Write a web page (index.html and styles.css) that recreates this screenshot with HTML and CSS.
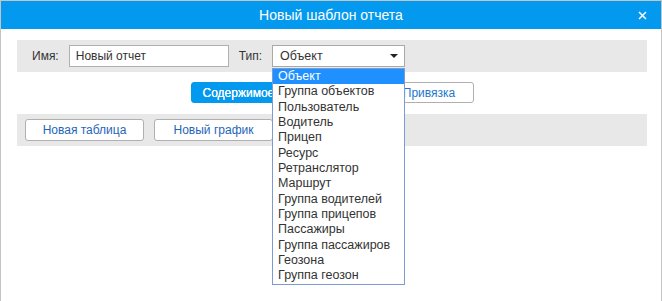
FILE: index.html
```html
<!DOCTYPE html>
<html lang="ru">
<head>
<meta charset="utf-8">
<title>Новый шаблон отчета</title>
<link rel="stylesheet" href="styles.css">
</head>
<body>
<div class="dialog">
  <div class="header">
    <span class="title">Новый шаблон отчета</span>
    <span class="close">
      <svg width="9" height="9" viewBox="0 0 9 9"><path d="M1 1L8 8M8 1L1 8" stroke="#fff" stroke-width="1.5" fill="none"/></svg>
    </span>
  </div>
  <div class="content">
    <div class="band props">
      <label class="lbl">Имя:</label>
      <div class="input">Новый отчет</div>
      <label class="lbl lbl-type">Тип:</label>
      <div class="select-wrap">
        <div class="select">
          <span>Объект</span>
          <span class="arrow"></span>
        </div>
        <ul class="options">
          <li class="sel">Объект</li>
          <li>Группа объектов</li>
          <li>Пользователь</li>
          <li>Водитель</li>
          <li>Прицеп</li>
          <li>Ресурс</li>
          <li>Ретранслятор</li>
          <li>Маршрут</li>
          <li>Группа водителей</li>
          <li>Группа прицепов</li>
          <li>Пассажиры</li>
          <li>Группа пассажиров</li>
          <li>Геозона</li>
          <li>Группа геозон</li>
        </ul>
      </div>
    </div>
    <div class="tabs">
      <button class="tab active t1">Содержимое</button>
      <button class="tab t2" aria-label="Параметры"></button>
      <button class="tab t3">Привязка</button>
    </div>
    <div class="band tools">
      <button class="btn">Новая таблица</button>
      <button class="btn">Новый график</button>
      <button class="btn" aria-label="Новая секция"></button>
    </div>
  </div>
</div>
</body>
</html>
```

FILE: styles.css
```css
* { box-sizing: border-box; }
html, body { margin: 0; padding: 0; background: #fff; }
body { font-family: "Liberation Sans", Arial, sans-serif; font-size: 12px; color: #333; }

.dialog {
  width: 662px;
  height: 301px;
  border: 1px solid #c4c4c4;
  border-bottom: none;
  position: relative;
}

.header {
  height: 28px;
  background: #0399ee;
  display: flex;
  align-items: center;
  justify-content: center;
  position: relative;
}
.title { color: #fff; font-size: 14px; }
.close {
  position: absolute;
  right: 14px;
  top: 10px;
  width: 9px;
  height: 9px;
  display: block;
  line-height: 0;
}

.content { padding: 11px 14px 0 16px; }

.band {
  background: #e8e8e8;
  height: 32px;
  display: flex;
  align-items: center;
}
.props { padding-left: 15px; }

.lbl { color: #333; margin-right: 10px; }
.lbl-type { margin-left: 10px; }

.input {
  width: 160px;
  height: 22px;
  border: 1px solid #b0b0b0;
  background: #fff;
  padding: 0 6px;
  display: flex;
  align-items: center;
  color: #333;
}

.select-wrap { position: relative; }
.select {
  width: 133px;
  height: 22px;
  border: 1px solid #a9a9a9;
  background: #fff;
  display: flex;
  align-items: center;
  justify-content: space-between;
  padding: 0 6px 0 7px;
  color: #333;
  font-size: 12.5px;
}
.arrow {
  width: 0;
  height: 0;
  border-left: 4px solid transparent;
  border-right: 4px solid transparent;
  border-top: 4px solid #222;
}

.options {
  position: absolute;
  left: 0;
  top: 23px;
  width: 133px;
  margin: 0;
  padding: 0;
  list-style: none;
  background: #fff;
  border: 1px solid #7b9bd1;
  z-index: 10;
  font-size: 12.5px;
}
.options li {
  height: 15.33px;
  line-height: 15px;
  padding-left: 5px;
  color: #333;
  white-space: nowrap;
}
.options li.sel { background: #1e90ff; color: #fff; }

.tabs {
  display: flex;
  justify-content: center;
  margin: 10px 0 11px;
}
.tab {
  font-family: inherit;
  font-size: 12px;
  height: 21px;
  border: 1px solid #b0b0b0;
  background: #fff;
  color: #2277cc;
  padding: 0;
  margin: 0;
}
.tab.active {
  background: #0399ee;
  border-color: #0399ee;
  color: #fff;
  text-align: left;
  padding-left: 11px;
  text-shadow: 0 0 0.4px #fff;
}
.t1 { width: 102px; border-radius: 3px 0 0 3px; }
.t2 { width: 92px; border-left: none; border-right: none; }
.t3 { width: 89px; border-radius: 0 3px 3px 0; }

.tools { padding-left: 8px; gap: 10px; }
.btn {
  font-family: inherit;
  font-size: 12px;
  width: 119px;
  height: 22px;
  border: 1px solid #b0b0b0;
  border-radius: 3px;
  background: #fff;
  color: #1f66b8;
  padding: 0;
  margin: 0;
}
```
